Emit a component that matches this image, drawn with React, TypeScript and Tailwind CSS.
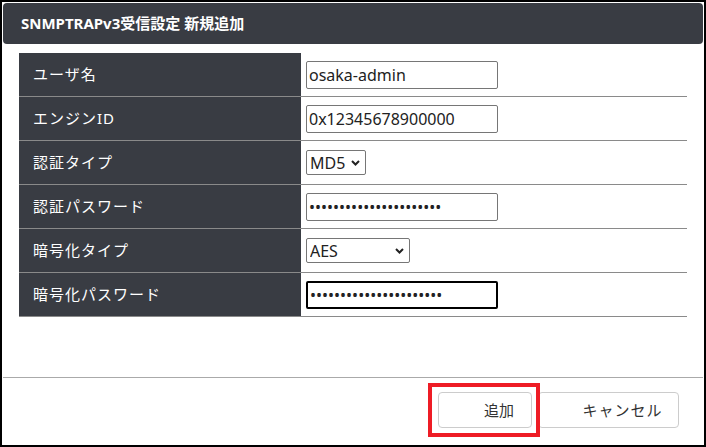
import React from 'react';

const rows: { label: string; kind: 'text' | 'password' | 'select'; value: string; width: string; options?: string[]; focused?: boolean }[] = [
  { label: 'ユーザ名', kind: 'text', value: 'osaka-admin', width: 'w-[192px]' },
  { label: 'エンジンID', kind: 'text', value: '0x12345678900000', width: 'w-[192px]' },
  { label: '認証タイプ', kind: 'select', value: 'MD5', width: 'w-[60px]', options: ['MD5', 'SHA'] },
  { label: '認証パスワード', kind: 'password', value: 'abcdefghijklmnopqrstuv', width: 'w-[192px]' },
  { label: '暗号化タイプ', kind: 'select', value: 'AES', width: 'w-[104px]', options: ['AES', 'DES'] },
  { label: '暗号化パスワード', kind: 'password', value: 'abcdefghijklmnopqrstuv', width: 'w-[192px]', focused: true },
];

const Chevron = () => (
  <svg className="pointer-events-none absolute right-[6px] top-1/2 -translate-y-1/2" width="9" height="6" viewBox="0 0 9 6">
    <path d="M1 1 L4.5 4.5 L8 1" fill="none" stroke="#222" strokeWidth="2" />
  </svg>
);

const App = () => {
  return (
    <div className="w-[706px] h-[447px] border-2 border-black bg-white flex flex-col font-['Noto_Sans','Noto_Sans_CJK_JP',sans-serif] text-[#222]">
      <header className="mx-[1px] mt-[1px] h-[41px] bg-[#393c43] rounded-[4px] flex items-center pl-[18px]">
        <h1 className="text-white font-bold text-[15px]">SNMPTRAPv3受信設定 新規追加</h1>
      </header>

      <div className="px-[17px] pt-[9px] flex-1">
        <div className="flex flex-col">
          {rows.map(r => (
            <div key={r.label} className="flex h-[44px] border-b border-[#8a8a8a]">
              <div className="w-[282px] bg-[#393c43] text-white text-[15px] tracking-[1px] flex items-center pl-[14px]">{r.label}</div>
              <div className="flex-1 flex items-center pl-[5px]">
                {r.kind === 'select' ? (
                  <div className={`relative ${r.width}`}>
                    <select
                      defaultValue={r.value}
                      className="appearance-none w-full h-[25px] border border-[#767676] rounded-[2px] pl-[3px] text-[16px] leading-none bg-white text-[#222]"
                    >
                      {r.options!.map(o => <option key={o}>{o}</option>)}
                    </select>
                    <Chevron />
                  </div>
                ) : (
                  <input
                    type={r.kind}
                    defaultValue={r.value}
                    className={`${r.width} h-[28px] rounded-[2px] px-[2px] text-[16px] text-[#222] bg-white outline-none ${r.focused ? 'border-2 border-black' : 'border border-[#767676]'}`}
                  />
                )}
              </div>
            </div>
          ))}
        </div>
      </div>

      <footer className="mx-[1px] h-[68px] border-t border-[#aaaaaa] flex items-start justify-end pt-[14px] pr-[24px]">
        <div className="relative flex">
          <button className="w-[94px] h-[36px] border border-[#cccccc] rounded-[4px] bg-white text-[15px] text-[#333] pl-[28px]">追加</button>
          <button className="w-[141px] h-[36px] border border-[#cccccc] rounded-[4px] bg-white text-[15px] text-[#333] pl-[28px] ml-[6px] tracking-[1px]">キャンセル</button>
          <div className="absolute left-[-10px] top-[-9px] w-[112px] h-[54px] border-4 border-[#ee1c25]" />
        </div>
      </footer>
    </div>
  );
};

export default App;
